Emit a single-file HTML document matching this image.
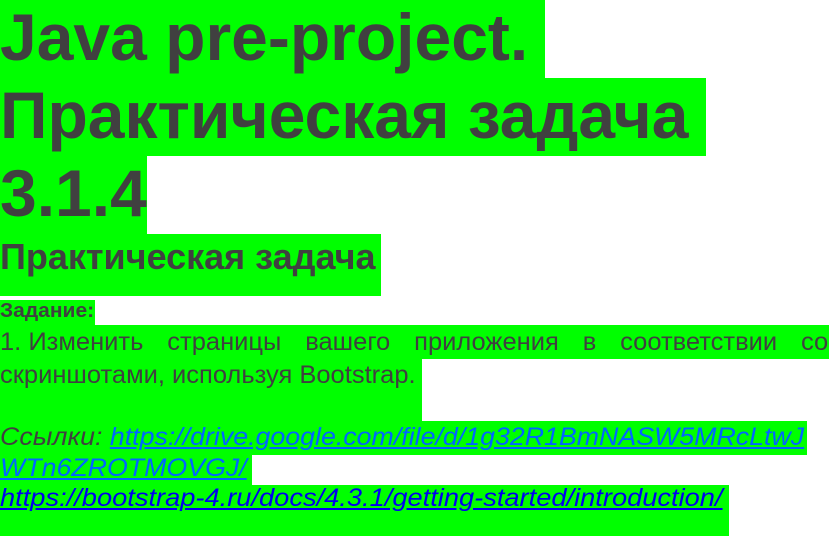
<!DOCTYPE html>
<html><head><meta charset="utf-8"><style>
html,body{margin:0;padding:0;width:829px;height:536px;overflow:hidden;background:#fff;position:relative}
.g{position:absolute;background:#00ff00}
.t{position:absolute;white-space:nowrap;color:#404040;font-family:"Liberation Sans",sans-serif;transform-origin:0 0}
.h{font-weight:bold;font-size:66px}
a{color:#0066ff;}
</style></head><body>
<div class="g" style="left:0;top:0;width:545px;height:78px"></div>
<div class="g" style="left:0;top:78px;width:706px;height:78px"></div>
<div class="g" style="left:0;top:156px;width:147px;height:78px"></div>
<div class="g" style="left:0;top:234px;width:381px;height:62px"></div>
<div class="g" style="left:0;top:300px;width:95px;height:25px"></div>
<div class="g" style="left:0;top:325px;width:829px;height:34px"></div>
<div class="g" style="left:0;top:359px;width:422px;height:62px"></div>
<div class="g" style="left:0;top:421px;width:807px;height:34px"></div>
<div class="g" style="left:0;top:455px;width:252px;height:30px"></div>
<div class="g" style="left:0;top:485px;width:729px;height:51px"></div>

<div class="t h" style="left:0;top:-1px">Java pre-project.</div>
<div class="t h" style="left:0;top:77px">Практическая задача</div>
<div class="t h" style="left:0;top:155px">3.1.4</div>
<div class="t" style="left:0;top:236px;font-weight:bold;font-size:36px">Практическая задача</div>
<div class="t" style="left:0;top:300px;font-weight:bold;font-size:20px;transform:scaleX(1.05)">Задание:</div>
<div class="t" style="left:0;top:328px;font-size:25px;width:812px;transform:scaleX(1.02);display:flex;justify-content:space-between"><span>1. Изменить</span><span>страницы</span><span>вашего</span><span>приложения</span><span>в</span><span>соответствии</span><span>со</span></div>
<div class="t" style="left:0;top:361px;font-size:25px;transform:scaleX(1.02)">скриншотами, используя Bootstrap.</div>
<div class="t" style="left:0;top:423px;font-size:25px;font-style:italic;transform:scaleX(1.07)">Ссылки: <a href="#">https://drive.google.com/file/d/1g32R1BmNASW5MRcLtwJ</a></div>
<div class="t" style="left:0;top:454px;font-size:25px;font-style:italic;transform:scaleX(1.07)"><a href="#">WTn6ZROTMOVGJ/</a></div>
<div class="t" style="left:0;top:484px;font-size:25px;font-style:italic;transform:scaleX(1.09)"><a href="#" style="color:#0000ee">https://bootstrap-4.ru/docs/4.3.1/getting-started/introduction/</a></div>
</body></html>
